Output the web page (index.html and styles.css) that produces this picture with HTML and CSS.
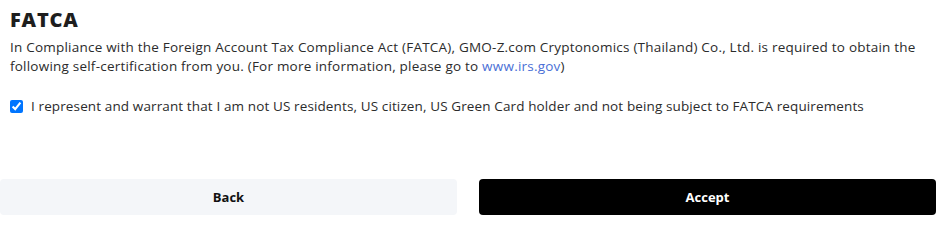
FILE: index.html
```html
<!DOCTYPE html>
<html lang="en">
<head>
  <meta charset="UTF-8">
  <meta name="viewport" content="width=device-width, initial-scale=1.0">
  <title>FATCA</title>
  <link rel="stylesheet" href="styles.css">
</head>
<body>

  <div class="fatca">
    <h2 class="title">FATCA</h2>
    <p class="desc">
      In Compliance with the Foreign Account Tax Compliance Act (FATCA), GMO-Z.com Cryptonomics (Thailand) Co., Ltd. is required to obtain the following self-certification from you. (For more information, please go to <a href="#">www.irs.gov</a>)
    </p>

    <!-- Confirmation -->
    <label class="confirm">
      <input type="checkbox" checked>
      <span>I represent and warrant that I am not US residents, US citizen, US Green Card holder and not being subject to FATCA requirements</span>
    </label>

    <div class="actions">
      <button class="btn btn-back">Back</button>
      <button class="btn btn-accept">Accept</button>
    </div>
  </div>

</body>
</html>
```

FILE: styles.css
```css
body {
  margin: 0;
  font-family: 'Open Sans', sans-serif;
  background: #fff;
  color: #2b2b2b;
}

.fatca {
  width: 936px;
  padding-top: 6px;
}

.title {
  margin: 0 0 5px 10px;
  font-size: 20px;
  font-weight: 800;
  color: #1e1e1e;
  letter-spacing: 0.8px;
}

.desc {
  margin: 0 0 0 10px;
  width: 925px;
  font-size: 13.5px;
  line-height: 19px;
  letter-spacing: 0.22px;
}

.desc a {
  color: #4a6fd6;
  text-decoration: none;
}

.confirm {
  display: flex;
  align-items: center;
  gap: 8px;
  margin: 21px 0 0 10px;
  font-size: 13.5px;
  letter-spacing: 0.12px;
}

.confirm input {
  margin: 0;
  width: 13px;
  height: 13px;
}

.actions {
  display: flex;
  gap: 22px;
  margin-top: 64px;
}

.btn {
  flex: 1;
  height: 36px;
  border: none;
  border-radius: 4px;
  font-family: inherit;
  font-size: 13px;
  font-weight: 700;
  cursor: pointer;
}

.btn-back {
  background: #f4f6f9;
  color: #111;
}

.btn-accept {
  background: #000;
  color: #fff;
}
```
